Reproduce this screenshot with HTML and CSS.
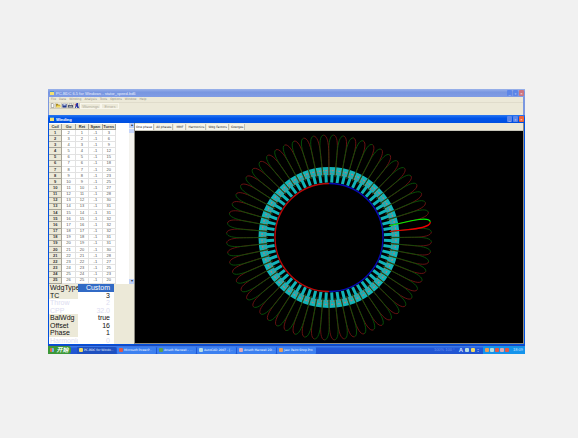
FILE: index.html
```html
<!DOCTYPE html>
<html lang="en">
<head>
<meta charset="utf-8">
<title>PC-BDC 6.5 for Windows</title>
<link rel="stylesheet" href="styles.css">
</head>
<body>
<main class="desktop">
  <header class="title title-app">
    <span class="app-icon"></span><h1>PC-BDC 6.5 for Windows - stator_speed.bd6</h1>
    <button class="win" aria-label="Minimize">_</button><button class="win" aria-label="Restore">▫</button><button class="win close" aria-label="Close">×</button>
  </header>
  <nav class="menu">
    <a href="#">File</a><a href="#">Data</a><a href="#">Winding</a><a href="#">Analysis</a><a href="#">Tools</a><a href="#">Options</a><a href="#">Window</a><a href="#">Help</a>
  </nav>
  <div class="toolbar">
    <button class="tool" aria-label="New"><svg viewBox="0 0 6 6"><path d="M1.5.5h2l1 1v4h-3z" fill="#fff" stroke="#555" stroke-width=".5"/></svg></button>
    <button class="tool" aria-label="Open"><svg viewBox="0 0 6 6"><path d="M0 1h2l1 1h2v3H0z" fill="#a98a20"/><path d="M1 3h5L5 5H0z" fill="#f4dc60"/></svg></button>
    <button class="tool" aria-label="Save"><svg viewBox="0 0 6 6"><path d="M.5 1h5v4.5h-5z" fill="#24388c"/><path d="M1.5 1h3v2h-3z" fill="#ccd4e8"/></svg></button>
    <button class="tool" aria-label="Print"><svg viewBox="0 0 6 6"><path d="M0 2.5h6v3H0z" fill="#444c68"/><path d="M1.5.5h3v2h-3z" fill="#fff" stroke="#666" stroke-width=".4"/><path d="M1 4h4v1H1z" fill="#c8c8c0"/></svg></button>
    <button class="tool" aria-label="Run"><svg viewBox="0 0 6 6"><path d="M3 0h2v3l1 3H4L3 4 2 6H1l1-3z" fill="#2430a0"/><path d="M1 1h1v2H1z" fill="#c03048"/></svg></button>
    <button class="msg msg-wide" disabled>Warnings</button><button class="msg" disabled>Errors</button>
  </div>
  <section class="child">
    <header class="title title-child">
      <span class="app-icon"></span><h2>Winding</h2>
      <button class="win" aria-label="Minimize">_</button><button class="win" aria-label="Restore">▫</button><button class="win close" aria-label="Close">×</button>
    </header>
    <div class="work">
      <aside class="side">
        <div class="grid-area">
          <table class="coils">
            <thead><tr><th>Coil</th><th>Go</th><th>Ret</th><th>Span</th><th>Turns</th></tr></thead>
            <tbody id="coil-rows"></tbody>
          </table>
          <div class="scroll"><span>▴</span><i class="thumb"></i><span class="down">▾</span></div>
        </div>
        <dl class="props">
          <dt>WdgType</dt><dd class="selected">Custom</dd>
          <dt>TC</dt><dd>3</dd>
          <dt class="off">Throw</dt><dd class="off">2</dd>
          <dt class="off">CPP</dt><dd class="off">32.0</dd>
          <dt>BalWdg</dt><dd>true</dd>
          <dt>Offset</dt><dd>16</dd>
          <dt>Phase</dt><dd>1</dd>
          <dt class="off">Harmonic</dt><dd class="off">0</dd>
        </dl>
      </aside>
      <div class="view">
        <div class="tabs">
          <button class="tab active">One phase</button><button class="tab">All phases</button><button class="tab tab-mmf">MMF</button><button class="tab">Harmonics</button><button class="tab">Wdg Factors</button><button class="tab">Goerges</button>
        </div>
        <div class="plot">
          <svg viewBox="-194 -106 388 211" role="img" aria-label="Winding layout">
            <defs>
              <path id="go" d="M-2.800-61C-3-72-8-102-.5-102.500"/>
              <path id="ret" d="M2.800-61C3-72 7-102-.5-102.500"/>
            </defs>
            <circle r="66.500" fill="none" stroke="#12b4b8" stroke-width="8"/>
            <g id="teeth" fill="#12b4b8"></g>
            <circle r="67" fill="none" stroke="#a08484" stroke-width="1.400" stroke-dasharray="1 1.200 2 2.380"/>
            <circle r="64" fill="none" stroke="#887e7e" stroke-width="1.400" stroke-dasharray="2 1 1 2.280"/>
            <path d="M0-54A54 54 0 0 0 0 54" fill="none" stroke="#b80808" stroke-width="1.400"/>
            <path d="M0-54A54 54 0 0 1 0 54" fill="none" stroke="#0808b0" stroke-width="1.400"/>
            <g id="loops" fill="none"></g>
          </svg>
        </div>
      </div>
    </div>
  </section>
  <footer class="taskbar">
    <button class="start"><i></i>开始</button>
    <button class="task current"><i class="c-yellow"></i><span>PC-BDC for Windo...</span></button>
    <button class="task"><i class="c-red"></i><span>Microsoft PowerP...</span></button>
    <button class="task"><i class="c-green"></i><span>Ansoft Maxwell - ...</span></button>
    <button class="task"><i class="c-sheet"></i><span>AutoCAD 2007 - [...</span></button>
    <button class="task"><i class="c-pink"></i><span>Ansoft Maxwell 2D...</span></button>
    <button class="task"><i class="c-orange"></i><span>Jasc Paint Shop Pro</span></button>
    <span class="disk">100% 100 °</span>
    <span class="lang"><b>A</b><i class="c-sheet"></i><i class="c-yellow"></i><b>:</b></span>
    <span class="tray"><i class="c-orange"></i><i class="c-sheet"></i><i class="c-red"></i><i class="c-pink"></i><i class="c-red"></i><time>18:09</time></span>
  </footer>
</main>
<script src="winding.js"></script>
</body>
</html>
```
FILE: styles.css
```css
* { box-sizing: border-box; }
body {
  margin: 0;
  padding: 89px 53px 85px 48px;
  background: #f1f1f1;
  font: 4px/6px "Liberation Sans", sans-serif;
  color: #222;
}
h1, h2, dl, dd { margin: 0; }
button { font: inherit; color: inherit; padding: 0; margin: 0; border: 0; background: none; }
a { color: inherit; text-decoration: none; }
.desktop {
  background: #ece9d8;
  border-right: 2px solid #7b98e0;
  border-left: 1px solid #7b98e0;
}
.title { display: flex; align-items: center; gap: 1px; height: 8px; padding: 0 1px; color: #fff; }
.title h1, .title h2 { flex: 1; font-size: 4px; line-height: 7px; font-weight: bold; }
.title h1 { font-weight: normal; color: #e8eefc; }
.title-app { background: linear-gradient(#9ab2ea, #7896e0 40%, #809ce4); margin: 0 -2px 0 -1px; }
.title-child { background: linear-gradient(#2a78f0, #0054e8 40%, #0050e0); }
.app-icon { width: 4px; height: 4px; margin: 0 1px; background: #f4e070; border-top: 1px solid #4a90d0; }
.win { width: 5px; height: 6px; line-height: 5px; background: #5c86e8; color: #fff; border-radius: 1px; text-align: center; }
.title-app .close { background: #cc7480; }
.title-child .close { background: #f06438; }
.menu { display: flex; gap: 3px; height: 5px; font: 3px/5px "DejaVu Sans", sans-serif; padding-left: 2px; color: #8c897e; }
.toolbar { display: flex; align-items: center; height: 13px; padding: 0 0 6px 1px; border-top: 1px solid #e0dccb; }
.tool { width: 6px; height: 6px; border: 1px solid #d0ccbc; border-width: 0 1px 1px 0; }
.tool svg { display: block; width: 5px; height: 5px; }
.msg { width: 18px; height: 6px; line-height: 5px; color: #b0ad9e; border: 1px solid #f8f6ec; }
.msg-wide { width: 21px; }
.child { margin: 0 -2px 0 -1px; border: 1px solid #0050e0; border-top: 0; }
.title-child { margin: 0 -1px; }
.work { display: flex; height: 221px; }
.side { flex: none; width: 85px; display: flex; flex-direction: column; }
.grid-area { display: flex; justify-content: space-between; height: 161px; background: #fff; }
.coils { width: 67px; height: 160px; margin-top: 1px; table-layout: fixed; border-collapse: separate; border-spacing: 0; line-height: 4px; text-align: center; }
.coils th, .coils td { padding: 0; border: 1px solid #e2e2e2; border-width: 0 1px 1px 0; color: #555; }
.coils th { background: #ece9d8; border-color: #a8a598; color: #333; font-weight: bold; }
.coils thead th { height: 6px; }
.scroll { width: 5px; display: flex; flex-direction: column; background: #f4f3ee; color: #234; line-height: 4px; text-align: center; }
.scroll span { height: 5px; background: #bed0f8; }
.thumb { height: 4px; margin-top: 1px; background: #c6d6fb; }
.scroll .down { margin-top: auto; }
.props { display: grid; grid-template-columns: 29px 36px; grid-template-rows: repeat(8, 1fr); flex: 1; min-height: 0; font-size: 7px; line-height: 7px; color: #111; }
.props dt { padding-left: 1px; white-space: nowrap; }
.props dd { background: #fff; text-align: right; padding-right: 4px; }
.props .selected { background: #316ac5; color: #fff; }
.props .off { background: #fff; color: #dcdcf0; }
.view { flex: 1; min-width: 0; display: flex; flex-direction: column; border: 1px solid #8c8a80; border-width: 0 1px 1px; }
.tabs { display: flex; height: 8px; padding: 1px 0 0; gap: 1px; border-bottom: 1px solid #c8c6ba; }
.tab { height: 6px; font: 3px/6px "DejaVu Sans", sans-serif; padding: 0 1px; background: #f5f4ea; border-right: 1px solid #c4c1b2; white-space: nowrap; color: #222; }
.tab.active { background: #fff; }
.tab-mmf { width: 12px; }
.plot { flex: 1; min-height: 0; background: #000; }
.plot svg { display: block; width: 100%; height: 100%; }
.taskbar { display: flex; align-items: center; height: 9px; margin: 0 -2px 0 -1px; background: linear-gradient(#3c80f0, #2358d8 30%, #2054d0); color: #d4e2ff; border-top: 1px solid #1c48b8; }
.taskbar i { flex: none; width: 4px; height: 4px; border-radius: 1px; }
.start { width: 23px; height: 8px; display: flex; align-items: center; justify-content: center; gap: 2px; margin-right: 6px; font: italic bold 6px/8px "Noto Sans CJK SC", sans-serif; color: #fff; background: #3c9838; border-radius: 0 3px 3px 0; }
.start i { background: linear-gradient(90deg, #e07040 50%, #70b0f0 50%); }
.task { width: 39px; height: 7px; display: flex; align-items: center; gap: 1px; padding-left: 2px; margin-right: 1px; font: 3px/6px "DejaVu Sans", sans-serif; background: #3c80f0; color: #fff; border-radius: 1px; white-space: nowrap; }
.task.current { background: #1e50c0; }
.c-yellow { background: #f0d860; }
.c-red { background: #e05848; }
.c-green { background: #60a048; }
.c-sheet { background: #b8dce0; }
.c-pink { background: #e0a8b0; }
.c-orange { background: #e89c58; }
.disk { margin-left: auto; color: #6c94ec; white-space: nowrap; }
.lang { display: flex; align-items: center; gap: 2px; margin: 0 4px 0 4px; font-size: 6px; }
.tray { display: flex; align-items: center; gap: 1px; width: 42px; height: 8px; padding-left: 2px; background: #1494ec; }
.tray time { margin-left: 3px; }
```
FILE: winding.js
```js
(() => {
  const turns = [3, 6, 9, 12, 15, 18, 20, 23, 25, 27, 28, 30, 31, 31, 32, 32, 32, 31, 31, 30, 28, 27, 25, 23, 20];
  document.getElementById("coil-rows").innerHTML = turns
    .map((t, i) => `<tr><th>${i + 1}</th><td>${i + 2}</td><td>${i + 1}</td><td>-1</td><td>${t}</td></tr>`)
    .join("");

  const slots = 64;
  const highlighted = 14;
  const step = 360 / slots;
  const coil = (angle, go, ret, width) =>
    `<g transform="rotate(${angle})" stroke-width="${width}"><use href="#go" stroke="${go}"/><use href="#ret" stroke="${ret}"/></g>`;
  let teeth = "";
  let loops = "";
  let selected = "";
  for (let i = 0; i < slots; i++) {
    const angle = (i + 0.5) * step;
    teeth += `<rect x="-1.5" y="-64" width="3" height="9" transform="rotate(${angle})"/>`;
    if (i === highlighted) selected = coil(angle, "#00f000", "#f00000", 1.2);
    else loops += coil(angle, "#085808", "#741414", 0.8);
  }
  document.getElementById("teeth").innerHTML = teeth;
  document.getElementById("loops").innerHTML = loops + selected;
})();
```
